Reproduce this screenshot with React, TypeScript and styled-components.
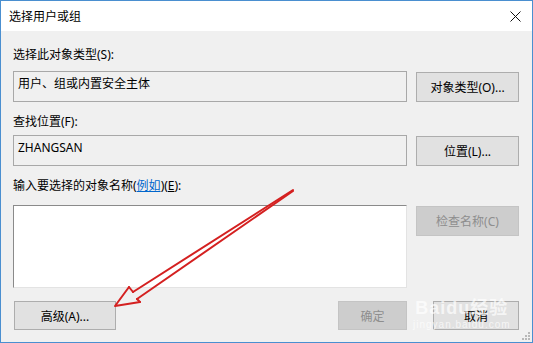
import React from 'react';
import styled, { createGlobalStyle } from 'styled-components';

const GlobalStyle = createGlobalStyle`
  html, body {
    margin: 0;
    padding: 0;
    background: #ffffff;
  }
  body {
    font-family: "Noto Sans", "Noto Sans CJK SC", sans-serif;
    font-size: 12px;
    color: #000;
  }
`;

const Window = styled.div`
  position: relative;
  width: 533px;
  height: 343px;
  box-sizing: border-box;
  border: 1px solid #4a8fd0;
  background: #f0f0f0;
  display: flex;
  flex-direction: column;
  overflow: hidden;
`;

const TitleBar = styled.div`
  height: 30px;
  background: #ffffff;
  display: flex;
  align-items: center;
  justify-content: space-between;
  padding: 0 10px 0 8px;
  font-size: 12px;
`;

const CloseButton = styled.div`
  width: 14px;
  height: 14px;
  display: flex;
  align-items: center;
  justify-content: center;
`;

const Content = styled.div`
  display: grid;
  grid-template-columns: 394px 103px;
  column-gap: 9px;
  padding: 16px 12px 0 12px;
`;

const Label = styled.div<{ $below: number }>`
  grid-column: 1 / 3;
  height: 16px;
  line-height: 16px;
  margin-bottom: ${(p) => p.$below}px;
`;

const Field = styled.div<{ $below: number }>`
  height: 31px;
  box-sizing: border-box;
  border: 1px solid #a8a8a8;
  background: #f0f0f0;
  padding: 4px 0 0 4px;
  line-height: 16px;
  margin-bottom: ${(p) => p.$below}px;
`;

const NameArea = styled.div`
  height: 83px;
  box-sizing: border-box;
  background: #ffffff;
  border-top: 1px solid #8a8a8a;
  border-left: 1px solid #8a8a8a;
  border-right: 1px solid #e3e3e3;
  border-bottom: 1px solid #e3e3e3;
  margin-bottom: 12px;
`;

const Button = styled.div<{ $disabled?: boolean; $width?: number; $height?: number }>`
  width: ${(p) => (p.$width ? `${p.$width}px` : '100%')};
  height: ${(p) => p.$height ?? 30}px;
  box-sizing: border-box;
  border: 1px solid ${(p) => (p.$disabled ? '#c4c4c4' : '#adadad')};
  background: ${(p) => (p.$disabled ? '#cdcdcd' : '#e1e1e1')};
  color: ${(p) => (p.$disabled ? '#8e8e8e' : '#000')};
  display: flex;
  align-items: center;
  justify-content: center;
  margin-top: 1px;
`;

const Footer = styled.div`
  display: flex;
  align-items: center;
  padding: 0 13px 0 13px;
`;

const FooterRight = styled.div`
  margin-left: auto;
  display: flex;
  gap: 26px;
`;

const Link = styled.span`
  color: #0066cc;
  text-decoration: underline;
`;

const Key = styled.span`
  text-decoration: underline;
`;

const Overlay = styled.svg`
  position: absolute;
  left: -1px;
  top: -1px;
  pointer-events: none;
`;

const Watermark = styled.div`
  position: absolute;
  left: 412px;
  top: 296px;
  color: rgba(255, 255, 255, 0.7);
  text-align: center;
  white-space: nowrap;
  pointer-events: none;
`;

const WatermarkBrand = styled.div`
  font-family: "Liberation Sans", "Noto Sans CJK SC", sans-serif;
  font-weight: bold;
  font-size: 18px;
  line-height: 22px;
  letter-spacing: 1px;
`;

const WatermarkUrl = styled.div`
  font-family: "Liberation Sans", sans-serif;
  font-size: 10px;
  line-height: 12px;
  letter-spacing: 1px;
`;

const Grip = styled.svg`
  position: absolute;
  right: 2px;
  bottom: 2px;
`;

export default function App() {
  return (
    <>
      <GlobalStyle />
      <Window>
        <TitleBar>
          <span>选择用户或组</span>
          <CloseButton>
            <svg width="11" height="11" viewBox="0 0 11 11">
              <path d="M0.5 0.5 L10.5 10.5 M10.5 0.5 L0.5 10.5" stroke="#111" strokeWidth="1" />
            </svg>
          </CloseButton>
        </TitleBar>

        <Content>
          <Label $below={8}>选择此对象类型(S):</Label>
          <Field $below={12}>用户、组或内置安全主体</Field>
          <Button>对象类型(O)...</Button>

          <Label $below={5}>查找位置(F):</Label>
          <Field $below={12}>ZHANGSAN</Field>
          <Button>位置(L)...</Button>

          <Label $below={11}>
            输入要选择的对象名称(<Link>例如</Link>)(<Key>E</Key>):
          </Label>
          <NameArea />
          <Button $disabled>检查名称(C)</Button>
        </Content>

        <Footer>
          <Button $width={102} $height={29}>高级(A)...</Button>
          <FooterRight>
            <Button $disabled $width={69} $height={29}>确定</Button>
            <Button $width={86} $height={29}>取消</Button>
          </FooterRight>
        </Footer>

        <Watermark>
          <WatermarkBrand>Baidu经验</WatermarkBrand>
          <WatermarkUrl>jingyan.baidu.com</WatermarkUrl>
        </Watermark>

        <Grip width="10" height="10" viewBox="0 0 10 10">
          <rect x="8" y="2" width="2" height="2" fill="#b8b8b8" />
          <rect x="5" y="5" width="2" height="2" fill="#b8b8b8" />
          <rect x="8" y="5" width="2" height="2" fill="#b8b8b8" />
          <rect x="2" y="8" width="2" height="2" fill="#b8b8b8" />
          <rect x="5" y="8" width="2" height="2" fill="#b8b8b8" />
          <rect x="8" y="8" width="2" height="2" fill="#b8b8b8" />
        </Grip>

        <Overlay width="533" height="343" viewBox="0 0 533 343">
          <g fill="none" stroke="#d42020" strokeWidth="2" strokeLinejoin="round" strokeLinecap="round">
            <path d="M293 190 L133 292" />
            <path d="M293 191 L137 299" />
            <path d="M129 287 L115 306 L140 302" />
            <path d="M129 287 L133 292 M140 302 L137 299" />
          </g>
        </Overlay>
      </Window>
    </>
  );
}
